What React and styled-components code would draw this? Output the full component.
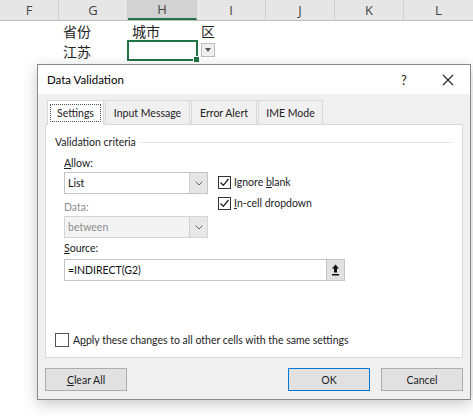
import styled, { createGlobalStyle } from "styled-components"

const GlobalStyle = createGlobalStyle`
    html, body {
        margin: 0;
        padding: 0;
        background: #ffffff;
    }
    body {
        font-family: "Lato", "Noto Sans", sans-serif;
        width: 473px;
        height: 416px;
        overflow: hidden;
        position: relative;
    }
`

const columns = [
    { name: "F", width: 59 },
    { name: "G", width: 69 },
    { name: "H", width: 69, active: true },
    { name: "I", width: 69 },
    { name: "J", width: 69 },
    { name: "K", width: 69 },
    { name: "L", width: 69 },
]

const cells = [
    ["", "省份", "城市", "区", "", "", ""],
    ["", "江苏", "", "", "", "", ""],
]

const Sheet = styled.div`
    display: flex;
    flex-direction: column;
    width: 473px;
`

const HeaderRow = styled.div`
    display: flex;
    height: 20px;
    background: #e6e6e6;
    border-bottom: 1px solid #bdbdbd;
`

const ColHead = styled.div`
    display: flex;
    align-items: center;
    justify-content: center;
    box-sizing: border-box;
    width: ${p => p.$w}px;
    border-right: 1px solid #cfcfcf;
    font-family: "Open Sans", "Noto Sans", sans-serif;
    font-size: 13px;
    color: #444;
    background: ${p => (p.$active ? "#d2d2d2" : "transparent")};
    border-bottom: ${p => (p.$active ? "2px solid #217346" : "none")};
    &:last-child {
        border-right: none;
    }
`

const Row = styled.div`
    display: flex;
    height: 20px;
`

const Cell = styled.div`
    position: relative;
    box-sizing: border-box;
    width: ${p => p.$w}px;
    padding-left: 4px;
    display: flex;
    align-items: center;
    font-family: "Noto Sans CJK SC", sans-serif;
    font-size: 14px;
    color: #222;
`

const Selection = styled.div`
    position: absolute;
    left: -1px;
    top: -1px;
    right: -1px;
    bottom: 0;
    border: 2px solid #217346;
    &::after {
        content: "";
        position: absolute;
        right: -4px;
        bottom: -4px;
        width: 5px;
        height: 5px;
        background: #217346;
        border: 1px solid #fff;
    }
`

const CellDrop = styled.div`
    position: absolute;
    left: 73px;
    top: 2px;
    width: 14px;
    height: 14px;
    box-sizing: border-box;
    background: #f0f0f0;
    border: 1px solid #bdbdbd;
    display: flex;
    align-items: center;
    justify-content: center;
    &::before {
        content: "";
        border-left: 3.5px solid transparent;
        border-right: 3.5px solid transparent;
        border-top: 4px solid #555;
    }
`

const Dialog = styled.div`
    position: absolute;
    left: 37px;
    top: 64px;
    width: 434px;
    height: 336px;
    box-sizing: border-box;
    border: 1px solid #8a8a8a;
    background: #f0f0f0;
    box-shadow: 0 4px 14px rgba(0, 0, 0, 0.22);
    display: flex;
    flex-direction: column;
    font-size: 10.5px;
    color: #000;
`

const TitleBar = styled.div`
    height: 29px;
    background: #fff;
    display: flex;
    align-items: center;
    padding-left: 9px;
    font-size: 11.5px;
`

const Title = styled.div`
    flex: 1;
`

const TitleButton = styled.div`
    width: 44px;
    height: 29px;
    display: flex;
    align-items: center;
    justify-content: center;
    font-size: 13px;
    color: #222;
`

const Body = styled.div`
    flex: 1;
    display: flex;
    flex-direction: column;
    padding: 6px 7px 8px 7px;
`

const Tabs = styled.div`
    display: flex;
    padding-left: 2px;
    height: 24px;
`

const Tab = styled.div`
    display: flex;
    align-items: center;
    justify-content: center;
    box-sizing: border-box;
    width: ${p => p.$w}px;
    margin-right: 1px;
    border: 1px solid #d9d9d9;
    border-bottom: none;
    background: ${p => (p.$active ? "#fff" : "#f0f0f0")};
    color: #222;
    position: relative;
    z-index: ${p => (p.$active ? 1 : 0)};
    margin-bottom: ${p => (p.$active ? "-1px" : "0")};
`

const FocusRect = styled.span`
    border: 1px dotted #555;
    padding: 2px 6px;
`

const Panel = styled.div`
    height: 234px;
    box-sizing: border-box;
    background: #fff;
    border: 1px solid #d9d9d9;
    padding: 9px 10px 10px 9px;
    display: flex;
    flex-direction: column;
`

const GroupTitle = styled.div`
    display: flex;
    align-items: center;
    gap: 4px;
    height: 16px;
    color: #222;
    &::after {
        content: "";
        flex: 1;
        height: 1px;
        background: #e6e6e6;
    }
`

const Group = styled.div`
    padding-left: 9px;
    display: flex;
    flex-direction: column;
`

const CriteriaRow = styled.div`
    display: flex;
    gap: 10px;
    margin-top: 5px;
`

const Column = styled.div`
    display: flex;
    flex-direction: column;
    width: ${p => (p.$w ? `${p.$w}px` : "auto")};
`

const Label = styled.div`
    height: 16px;
    line-height: 16px;
    margin-bottom: ${p => p.$gap || 1}px;
    color: ${p => (p.$disabled ? "#8d8d8d" : "#222")};
    margin-top: ${p => p.$top || 0}px;
`

const Combo = styled.div`
    height: 22px;
    box-sizing: border-box;
    display: flex;
    border: 1px solid ${p => (p.$disabled ? "#d5d5d5" : "#c4c4c4")};
    background: ${p => (p.$disabled ? "#f3f3f3" : "#fff")};
    color: ${p => (p.$disabled ? "#8d8d8d" : "#111")};
    width: ${p => p.$w}px;
`

const ComboText = styled.div`
    flex: 1;
    display: flex;
    align-items: center;
    padding-left: 3px;
`

const ComboButton = styled.div`
    width: 17px;
    display: flex;
    align-items: center;
    justify-content: center;
    background: ${p => (p.$disabled ? "#e8e8e8" : "#e5e5e5")};
    border-left: 1px solid #d0d0d0;
`

const RefButton = styled.div`
    width: 17px;
    display: flex;
    align-items: center;
    justify-content: center;
    background: #e1e1e1;
    border-left: 1px solid #c4c4c4;
`

const Checks = styled.div`
    display: flex;
    flex-direction: column;
    gap: 7px;
    padding-top: 20px;
`

const CheckRow = styled.div`
    display: flex;
    align-items: center;
    gap: ${p => p.$gap || 3}px;
    height: 14px;
    color: #222;
`

const Box = styled.div`
    width: ${p => p.$size || 13}px;
    height: ${p => p.$size || 13}px;
    box-sizing: border-box;
    border: 1px solid ${p => (p.$size ? "#555" : "#333")};
    background: #fff;
    display: flex;
    align-items: center;
    justify-content: center;
`

const ApplyRow = styled(CheckRow)`
    margin-top: auto;
`

const Buttons = styled.div`
    display: flex;
    margin-top: 10px;
    gap: 11px;
`

const Button = styled.div`
    width: 82px;
    height: 23px;
    box-sizing: border-box;
    display: flex;
    align-items: center;
    justify-content: center;
    background: #e1e1e1;
    border: 1px solid ${p => (p.$default ? "#0078d7" : "#adadad")};
    color: #222;
    margin-right: ${p => (p.$push ? "auto" : "0")};
`

const Chevron = () => (
    <svg width="8" height="5" viewBox="0 0 8 5">
        <path d="M0.5 0.5 L4 4 L7.5 0.5" fill="none" stroke="#666" strokeWidth="1" />
    </svg>
)

const Tick = () => (
    <svg width="11" height="11" viewBox="0 0 11 11">
        <path d="M1.5 5.5 L4.3 8.3 L9.5 2" fill="none" stroke="#222" strokeWidth="1.3" />
    </svg>
)

const RefIcon = () => (
    <svg width="9" height="12" viewBox="0 0 9 12">
        <path d="M4.5 0.5 L8 4.5 L6 4.5 L6 8.5 L3 8.5 L3 4.5 L1 4.5 Z" fill="#111" />
        <rect x="1" y="10" width="7" height="1.5" fill="#111" />
    </svg>
)

const CloseIcon = () => (
    <svg width="12" height="12" viewBox="0 0 12 12">
        <path d="M1 1 L11 11 M11 1 L1 11" stroke="#222" strokeWidth="1.1" />
    </svg>
)

export default function App() {
    return (
        <>
            <GlobalStyle />
            <Sheet>
                <HeaderRow>
                    {columns.map(c => (
                        <ColHead key={c.name} $w={c.width} $active={c.active}>{c.name}</ColHead>
                    ))}
                </HeaderRow>
                {cells.map((row, r) => (
                    <Row key={r}>
                        {row.map((text, i) => (
                            <Cell key={i} $w={columns[i].width}>
                                {text}
                                {r === 1 && i === 2 && (
                                    <>
                                        <Selection />
                                        <CellDrop />
                                    </>
                                )}
                            </Cell>
                        ))}
                    </Row>
                ))}
            </Sheet>

            <Dialog>
                <TitleBar>
                    <Title>Data Validation</Title>
                    <TitleButton>?</TitleButton>
                    <TitleButton><CloseIcon /></TitleButton>
                </TitleBar>
                <Body>
                    <Tabs>
                        <Tab $w={57} $active><FocusRect>Settings</FocusRect></Tab>
                        <Tab $w={85}>Input Message</Tab>
                        <Tab $w={66}>Error Alert</Tab>
                        <Tab $w={65}>IME Mode</Tab>
                    </Tabs>
                    <Panel>
                        <GroupTitle>Validation criteria</GroupTitle>
                        <Group>
                            <CriteriaRow>
                                <Column $w={144}>
                                    <Label><u>A</u>llow:</Label>
                                    <Combo $w={144}>
                                        <ComboText>List</ComboText>
                                        <ComboButton><Chevron /></ComboButton>
                                    </Combo>
                                    <Label $disabled $top={5}>Data:</Label>
                                    <Combo $w={144} $disabled>
                                        <ComboText>between</ComboText>
                                        <ComboButton $disabled><Chevron /></ComboButton>
                                    </Combo>
                                </Column>
                                <Checks>
                                    <CheckRow>
                                        <Box><Tick /></Box>
                                        <span>Ignore <u>b</u>lank</span>
                                    </CheckRow>
                                    <CheckRow>
                                        <Box><Tick /></Box>
                                        <span><u>I</u>n-cell dropdown</span>
                                    </CheckRow>
                                </Checks>
                            </CriteriaRow>
                            <Label $top={2} $gap={3}><u>S</u>ource:</Label>
                            <Combo $w={281}>
                                <ComboText>=INDIRECT(G2)</ComboText>
                                <RefButton><RefIcon /></RefButton>
                            </Combo>
                        </Group>
                        <ApplyRow $gap={4}>
                            <Box $size={14} />
                            <span>A<u>p</u>ply these changes to all other cells with the same settings</span>
                        </ApplyRow>
                    </Panel>
                    <Buttons>
                        <Button $push><u>C</u>lear All</Button>
                        <Button $default>OK</Button>
                        <Button>Cancel</Button>
                    </Buttons>
                </Body>
            </Dialog>
        </>
    )
}
